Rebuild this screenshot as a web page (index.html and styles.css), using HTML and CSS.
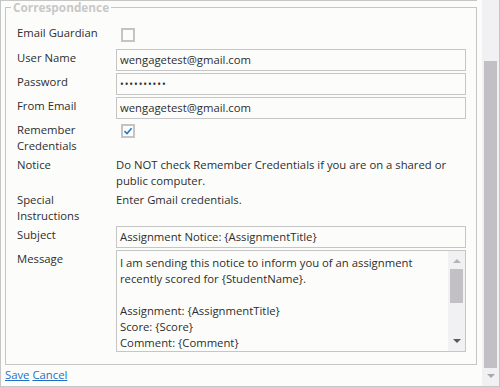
FILE: index.html
```html
<!DOCTYPE html>
<html lang="en">
<head>
    <meta charset="UTF-8">
    <meta name="viewport" content="width=device-width, initial-scale=1.0">
    <title>Correspondence</title>
    <link rel="stylesheet" href="styles.css">
</head>
<body>

    <div class="frame">
        <div class="pane">
            <div class="rule"></div>

            <fieldset class="group">
                <legend>Correspondence</legend>

                <div class="row row-first">
                    <span class="label">Email Guardian</span>
                    <span class="check"></span>
                </div>
                <div class="row">
                    <span class="label label-field">User Name</span>
                    <div class="field">wengagetest@gmail.com</div>
                </div>
                <div class="row">
                    <span class="label label-field">Password</span>
                    <div class="field"><span class="dots">&#8226;&#8226;&#8226;&#8226;&#8226;&#8226;&#8226;&#8226;&#8226;&#8226;</span></div>
                </div>
                <div class="row">
                    <span class="label label-field">From Email</span>
                    <div class="field">wengagetest@gmail.com</div>
                </div>
                <div class="row row-text">
                    <span class="label">Remember<br>Credentials</span>
                    <span class="check checked">
                        <svg width="10" height="10" viewBox="0 0 10 10">
                            <path d="M1.5 5.2 L4 7.6 L8.6 2.2" fill="none" stroke="#2a76cc" stroke-width="1.6"/>
                        </svg>
                    </span>
                </div>
                <div class="row row-text">
                    <span class="label">Notice</span>
                    <span class="value">Do NOT check Remember Credentials if you are on a shared or public computer.</span>
                </div>
                <div class="row row-text">
                    <span class="label">Special<br>Instructions</span>
                    <span class="value">Enter Gmail credentials.</span>
                </div>
                <div class="row">
                    <span class="label label-field">Subject</span>
                    <div class="field">Assignment Notice: {AssignmentTitle}</div>
                </div>
                <div class="row">
                    <span class="label label-field">Message</span>
                    <div class="memo">
                        <div class="memo-text">I am sending this notice to inform you of an assignment recently scored for {StudentName}.<br><br>Assignment: {AssignmentTitle}<br>Score: {Score}<br>Comment: {Comment}</div>
                        <div class="memo-scroll">
                            <span class="arrow-up light"></span>
                            <span class="memo-thumb"></span>
                            <span class="arrow-down dark"></span>
                        </div>
                    </div>
                </div>
            </fieldset>

            <div class="actions">
                <a href="#">Save</a>
                <a href="#">Cancel</a>
            </div>
        </div>

        <div class="vscroll">
            <span class="vthumb"></span>
            <span class="arrow-down light"></span>
        </div>
    </div>

</body>
</html>
```
FILE: styles.css
```css
body {
    margin: 0;
    font-family: "Open Sans", Arial, sans-serif;
    font-size: 11.3px;
    color: #2d2d2d;
    background-color: #fcfdfb;
}
.frame {
    width: 500px;
    height: 387px;
    box-sizing: border-box;
    border: 1px solid #c6c6c6;
    border-top: none;
    display: flex;
    overflow: hidden;
}
.pane {
    width: 481px;
    flex: none;
}
.rule {
    height: 1px;
    margin-left: -1px;
    margin-right: 5px;
    background-color: #c6c6c6;
}

/* fieldset */
.group {
    margin: -2px 5px 0 4px;
    padding: 10px 10px 12px 11px;
    border: 1px solid #c6c6c6;
}
.group legend {
    margin-left: -6px;
    padding: 0 2px;
    font-size: 11.8px;
    font-weight: bold;
    line-height: 16px;
    color: #c8c8c8;
}
.row {
    display: grid;
    grid-template-columns: 99px 350px;
    align-items: start;
    margin-top: 2px;
    line-height: 16px;
}
.row-first {
    margin-top: 0;
    margin-bottom: 7px;
}
.row-text {
    margin-top: 3px;
}
.label-field {
    padding-top: 1px;
}

/* checkboxes */
.check {
    width: 14px;
    height: 14px;
    box-sizing: border-box;
    margin: 3px 0 0 5px;
    border: 2px solid #c4c4c4;
    display: flex;
    align-items: center;
    justify-content: center;
}
.row-text .check {
    margin-top: 2px;
}

/* text boxes */
.field {
    height: 22px;
    box-sizing: border-box;
    border: 1px solid #c6c6c6;
    padding: 0 3px;
    line-height: 20px;
    white-space: nowrap;
    overflow: hidden;
}
.dots {
    font-size: 10px;
    letter-spacing: 0.9px;
    vertical-align: top;
}
.memo {
    height: 102px;
    box-sizing: border-box;
    border: 1px solid #c6c6c6;
    display: flex;
    overflow: hidden;
}
.memo-text {
    flex: 1;
    padding: 4px 3px 0;
    line-height: 16px;
}
.memo-scroll {
    width: 17px;
    flex: none;
    background-color: #f1f0f3;
    display: flex;
    flex-direction: column;
    align-items: center;
}
.memo-thumb {
    width: 13px;
    height: 34px;
    margin-top: 6px;
    background-color: #c2c0c4;
}
.memo-scroll .arrow-up {
    margin-top: 8px;
}
.memo-scroll .arrow-down {
    margin-top: auto;
    margin-bottom: 8px;
}

/* arrows */
.arrow-up,
.arrow-down {
    width: 0;
    height: 0;
    border-left: 4px solid transparent;
    border-right: 4px solid transparent;
}
.arrow-up {
    border-bottom: 4px solid #b4b3b6;
}
.arrow-down.dark {
    border-top: 4px solid #5a5a5a;
}
.arrow-down.light {
    border-top: 4px solid #a9a8ac;
}

/* links */
.actions {
    padding: 2px 4px 0;
    line-height: 16px;
}
.actions a {
    color: #1f6fc5;
    text-decoration: underline;
}

/* page scrollbar */
.vscroll {
    width: 17px;
    flex: none;
    background-color: #f1f0f3;
    display: flex;
    flex-direction: column;
    align-items: center;
}
.vthumb {
    width: 13px;
    height: 307px;
    margin-top: 61px;
    background-color: #c2c0c4;
}
.vscroll .arrow-down {
    margin-top: auto;
    margin-bottom: 8px;
}
```
